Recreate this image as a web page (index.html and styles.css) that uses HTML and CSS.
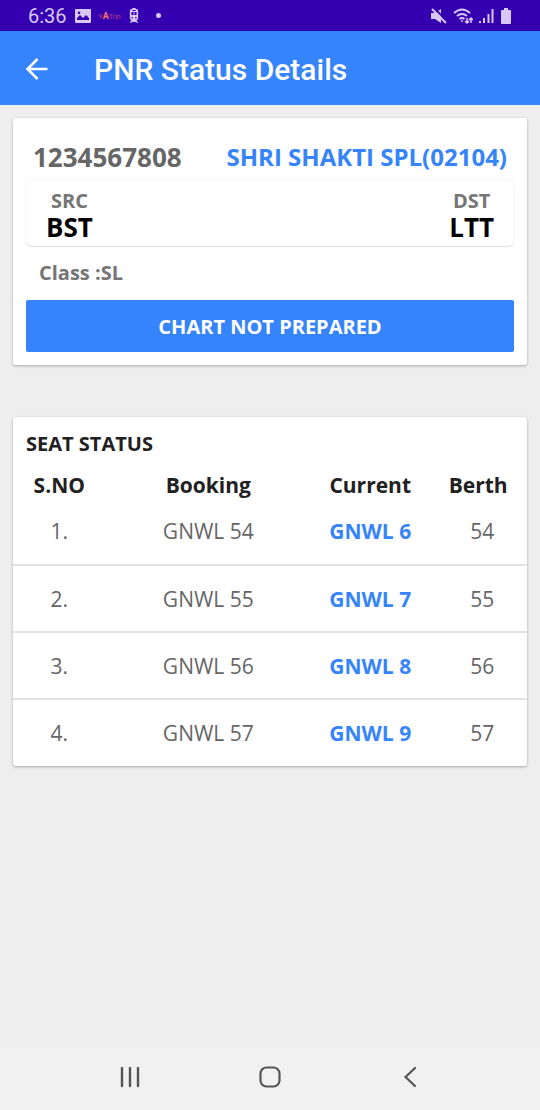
FILE: index.html
```html
<!DOCTYPE html>
<html lang="en">
<head>
  <meta charset="UTF-8">
  <meta name="viewport" content="width=device-width, initial-scale=1.0">
  <title>PNR Status Details</title>
  <link rel="stylesheet" href="styles.css">
</head>
<body>
  <div class="status-bar">
    <div class="status-left">
      <span class="clock">6:36</span>
      <svg width="16" height="16" viewBox="0 0 16 16" fill="currentColor"><path fill-rule="evenodd" d="M1 1h14a1 1 0 0 1 1 1v12a1 1 0 0 1-1 1H1a1 1 0 0 1-1-1V2a1 1 0 0 1 1-1zM2 12h12v-2l-3-3-3 3-3-3-3 3zM4 3.500a1.300 1.300 0 1 0 .1 0z"/></svg>
      <span class="app-logo">Y<b>A</b>Trin</span>
      <svg width="10" height="16" viewBox="0 0 12 16" preserveAspectRatio="none" fill="currentColor"><path fill-rule="evenodd" d="M3 1h1V0h4v1h1q2 0 2 2v7q0 2-2 2l2 3H9.500l-.7-1H3.200l-.7 1H1l2-3q-2 0-2-2V3q0-2 2-2zM3 4v3h2.500V4zM6.500 4v3H9V4zM3 9v1.500h1.500V9zM7.500 9v1.500H9V9zM4 2v1h4V2z"/></svg>
      <span class="dot"></span>
    </div>
    <div class="status-right">
      <svg width="16" height="16" viewBox="0 0 16 16"><path fill="currentColor" d="M0 5h4l6-4v14l-6-4H0z"/><path stroke="#3500b0" stroke-width="2" d="M3 0l13 13"/><path stroke="currentColor" stroke-width="2" d="M1 1l14 14"/></svg>
      <svg width="20" height="16" viewBox="0 0 20 16" fill="none" stroke="currentColor" stroke-width="2"><path d="M1 5q8-7 16 0M4 8q5-4 10 0M6.500 11q2.500-2 5 0"/><path stroke-width="1.500" d="M14 10v5M12 13l2 2 2-2M18 15v-5M16 12l2-2 2 2"/><circle cx="9" cy="13" r="1" fill="currentColor" stroke="none"/></svg>
      <svg width="15" height="16" viewBox="0 0 15 16" stroke="currentColor" stroke-width="2"><path d="M1 13v2M5 10v5M9.500 6v9M13.500 1v14"/></svg>
      <svg width="12" height="16" viewBox="0 0 12 16" fill="currentColor"><path d="M4 0h4v2h2q1 0 1 1v12q0 1-1 1H2q-1 0-1-1V3q0-1 1-1h2z"/></svg>
    </div>
  </div>

  <header class="toolbar">
    <button class="back" aria-label="Back">
      <svg width="24" height="24" viewBox="0 0 24 24" fill="none" stroke="currentColor" stroke-width="2.500"><path d="M22.500 12H3M12.500 2l-10 10 10 10"/></svg>
    </button>
    <h1>PNR Status Details</h1>
  </header>

  <main class="content">
    <section class="card summary">
      <div class="train">
        <span class="pnr">1234567808</span>
        <span class="train-name">SHRI SHAKTI SPL(02104)</span>
      </div>
      <div class="route">
        <div class="station">
          <span class="station-label">SRC</span>
          <span class="station-code">BST</span>
        </div>
        <div class="station">
          <span class="station-label">DST</span>
          <span class="station-code">LTT</span>
        </div>
      </div>
      <p class="travel-class">Class :SL</p>
      <button class="chart">CHART NOT PREPARED</button>
    </section>

    <section class="card seats">
      <h2>SEAT STATUS</h2>
      <table>
        <thead>
          <tr><th class="col-no">S.NO</th><th class="col-booking">Booking</th><th class="col-current">Current</th><th>Berth</th></tr>
        </thead>
        <tbody>
          <tr><td>1.</td><td>GNWL 54</td><td class="current">GNWL 6</td><td class="berth">54</td></tr>
          <tr><td>2.</td><td>GNWL 55</td><td class="current">GNWL 7</td><td class="berth">55</td></tr>
          <tr><td>3.</td><td>GNWL 56</td><td class="current">GNWL 8</td><td class="berth">56</td></tr>
          <tr><td>4.</td><td>GNWL 57</td><td class="current">GNWL 9</td><td class="berth">57</td></tr>
        </tbody>
      </table>
    </section>
  </main>

  <nav class="nav-bar">
    <button aria-label="Recent apps">
      <svg width="24" height="24" viewBox="0 0 24 24" stroke="currentColor" stroke-width="2.400" stroke-linecap="round"><path d="M4 3v18M12 3v18M20 3v18"/></svg>
    </button>
    <button aria-label="Home">
      <svg width="24" height="24" viewBox="0 0 24 24" fill="none" stroke="currentColor" stroke-width="2.200"><rect x="2.500" y="2.500" width="19" height="19" rx="6"/></svg>
    </button>
    <button aria-label="Back">
      <svg width="24" height="24" viewBox="0 0 24 24" fill="none" stroke="currentColor" stroke-width="2.200" stroke-linecap="round"><path d="M17 3l-9.500 9 9.500 9"/></svg>
    </button>
  </nav>
</body>
</html>
```
FILE: styles.css
```css
* {
  box-sizing: border-box;
}
body {
  margin: 0;
  min-height: 100vh;
  display: flex;
  flex-direction: column;
  background-color: #eeeeee;
  color: #212121;
  font-family: "Open Sans", sans-serif;
}
h1, h2, p {
  margin: 0;
}
button {
  border: none;
  padding: 0;
  background: none;
  color: inherit;
  font-family: inherit;
  cursor: pointer;
}
svg {
  display: block;
}

/* status bar */
.status-bar {
  display: flex;
  justify-content: space-between;
  align-items: center;
  height: 31px;
  padding: 0 28px;
  background-color: #3500b0;
  color: #d9c8f5;
}
.status-left, .status-right {
  display: flex;
  align-items: center;
  gap: 8px;
}
.status-right {
  gap: 6px;
}
.clock {
  font: 20px Roboto, sans-serif;
}
.app-logo {
  color: #c43a80;
  font: 7px Roboto, sans-serif;
}
.app-logo b {
  color: #ff7468;
  font-size: 9px;
}
.dot {
  width: 5px;
  height: 5px;
  margin-left: 9px;
  border-radius: 50%;
  background-color: currentColor;
}

/* toolbar */
.toolbar {
  display: flex;
  align-items: center;
  gap: 45px;
  height: 74px;
  padding: 2px 25px 0;
  background-color: #3684fb;
  color: white;
}
.toolbar h1 {
  font: 500 30px Roboto, sans-serif;
}

.content {
  flex: 1;
  padding: 13px;
}
.card {
  background-color: white;
  border-radius: 3px;
  box-shadow: 0 1px 3px rgba(0, 0, 0, 0.3);
}

/* train summary */
.summary {
  padding: 20px 13px 13px;
  margin-bottom: 52px;
  font-weight: bold;
}
.train {
  display: flex;
  justify-content: space-between;
  align-items: center;
  padding: 0 7px;
  line-height: 38px;
}
.pnr {
  color: #666666;
  font-size: 26px;
}
.train-name {
  color: #3684fb;
  font-size: 24px;
}
.route {
  display: flex;
  justify-content: space-between;
  margin-top: 4px;
  padding: 8px 20px 6px;
  border-radius: 5px;
  box-shadow: 0 0 2px rgba(0, 0, 0, 0.1), 0 1px 1px rgba(0, 0, 0, 0.1);
}
.station {
  display: flex;
  flex-direction: column;
  align-items: center;
  line-height: 26px;
}
.station-label {
  color: #757575;
  font-size: 20px;
}
.station-code {
  color: black;
  font-size: 26px;
}
.travel-class {
  padding: 0 13px;
  color: #757575;
  font-size: 20px;
  line-height: 54px;
}
.chart {
  width: 100%;
  height: 52px;
  border-radius: 2px;
  background-color: #3684fb;
  color: white;
  font-size: 20px;
  font-weight: bold;
}

/* seat table */
.seats h2 {
  padding: 13px 13px 0;
  font-size: 20px;
  line-height: 28px;
}
table {
  width: 100%;
  table-layout: fixed;
  border-collapse: collapse;
}
th {
  height: 40px;
  padding: 14px 0 0;
  font-size: 21px;
  line-height: 26px;
}
.col-no {
  width: 18%;
}
.col-booking {
  width: 40%;
}
.col-current {
  width: 23%;
}
td {
  height: 67px;
  padding: 0;
  border-bottom: 2px solid #e2e2e2;
  color: #666666;
  font-size: 21px;
  text-align: center;
}
tr:last-child td {
  border-bottom: none;
}
.current {
  color: #3684fb;
  font-weight: bold;
}
.berth {
  padding-left: 8px;
}

/* bottom navigation */
.nav-bar {
  display: flex;
  justify-content: space-around;
  align-items: center;
  height: 62px;
  padding: 0 11% 4px;
  background-color: #f1f1f1;
  color: #555555;
}
.nav-bar button {
  padding: 12px;
}
```
